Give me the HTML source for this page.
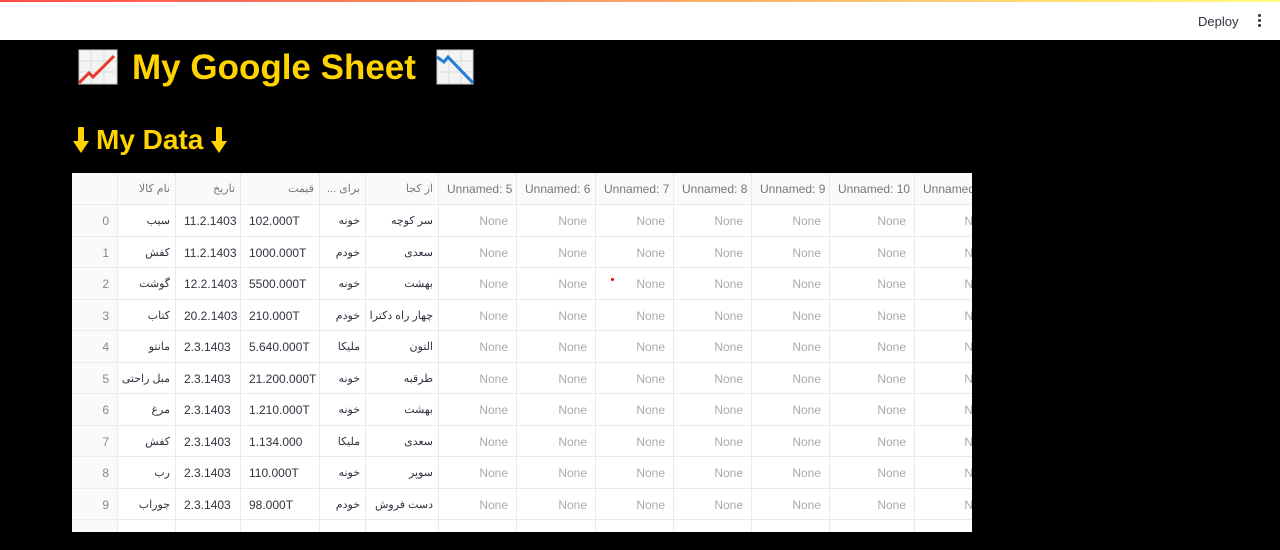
<!DOCTYPE html>
<html><head><meta charset="utf-8"><style>
*{margin:0;padding:0;box-sizing:border-box}
body{width:1280px;height:550px;background:#000;overflow:hidden;position:relative;font-family:"Liberation Sans","Noto Sans CJK SC",sans-serif}
.top{position:absolute;left:0;top:0;width:1280px;height:40px;background:#fff}
.grad{position:absolute;left:0;top:0;width:1280px;height:2px;background:linear-gradient(90deg,#ff4b4b,#fffd80)}
.deploy{position:absolute;left:1198px;top:14px;font-size:13px;color:#31333f}
.dots{position:absolute;left:1258px;top:14px;width:3px}
.dots i{display:block;width:3px;height:3px;border-radius:50%;background:#31333f;margin-bottom:2px}
.h1{position:absolute;left:132px;top:48px;color:#ffd400;font-weight:bold;font-size:35px;white-space:nowrap}
.h2{position:absolute;left:96px;top:124px;color:#ffd400;font-weight:bold;font-size:28px;white-space:nowrap}
.tbl{position:absolute;left:72px;top:173px;width:900px;height:359px;background:#fff;overflow:hidden}
.c{position:absolute;height:31.5px;line-height:33px;font-size:12px;color:#31333f;padding:0 8px;border-right:1px solid #eaeaec;border-bottom:1px solid #eaeaec;white-space:nowrap;overflow:hidden}
.h{color:#777;height:32px;line-height:33px;background:#fafafa}
.r{text-align:right}
.fa{direction:rtl;text-align:right;padding:0 5px;font-size:11px}
.n{color:#aaa}
.idx{color:#888;text-align:right;background:#fafafa}
</style></head><body>
<div class="top"><div class="grad"></div><div class="deploy">Deploy</div><div class="dots"><i></i><i></i><i></i></div></div>
<svg style="position:absolute;left:78px;top:49px" width="40" height="36" viewBox="0 0 40 36"><rect x="1" y="1" width="38" height="34" fill="#f4f4f4" stroke="#ccc"/><path d="M1 12H39M1 23H39M13 1V35M26 1V35" stroke="#ddd"/><path d="M1 34L11 24L15 28L36 7" stroke="#e53a2a" stroke-width="3" fill="none"/></svg>
<div class="h1">My Google Sheet</div>
<svg style="position:absolute;left:436px;top:49px" width="38" height="36" viewBox="0 0 38 36"><rect x="1" y="1" width="36" height="34" fill="#f4f4f4" stroke="#ccc"/><path d="M1 12H37M1 23H37M13 1V35M25 1V35" stroke="#ddd"/><path d="M1 8L8 13L12 8L37 34" stroke="#1e7fd6" stroke-width="3" fill="none"/></svg>
<svg style="position:absolute;left:73px;top:127px" width="16" height="26" viewBox="0 0 16 26"><rect x="5" y="0" width="6" height="15" rx="1" fill="#ffd400"/><path d="M0 14H16L8 26Z" fill="#ffd400"/></svg>
<div class="h2">My Data</div>
<svg style="position:absolute;left:211px;top:127px" width="16" height="26" viewBox="0 0 16 26"><rect x="5" y="0" width="6" height="15" rx="1" fill="#ffd400"/><path d="M0 14H16L8 26Z" fill="#ffd400"/></svg>
<div class="tbl" id="t"></div>
<div style="position:absolute;left:611px;top:278px;width:3px;height:3px;border-radius:50%;background:#e00"></div>
<script>
var xs=[0,46,104,169,248,294,367,445,524,602,680,758,843,930];
var hd=["","نام کالا","تاریخ","قیمت","برای ...","از کجا","Unnamed: 5","Unnamed: 6","Unnamed: 7","Unnamed: 8","Unnamed: 9","Unnamed: 10","Unnamed: 11"];
var rows=[["سیب","11.2.1403","102.000T","خونه","سر کوچه"],["کفش","11.2.1403","1000.000T","خودم","سعدی"],["گوشت","12.2.1403","5500.000T","خونه","بهشت"],["کتاب","20.2.1403","210.000T","خودم","چهار راه دکترا"],["مانتو","2.3.1403","5.640.000T","ملیکا","التون"],["مبل راحتی","2.3.1403","21.200.000T","خونه","طرقبه"],["مرغ","2.3.1403","1.210.000T","خونه","بهشت"],["کفش","2.3.1403","1.134.000","ملیکا","سعدی"],["رب","2.3.1403","110.000T","خونه","سوپر"],["جوراب","2.3.1403","98.000T","خودم","دست فروش"]];
var h="";
function cell(i,y,txt,cls){h+='<div class="c '+cls+'" style="left:'+xs[i]+'px;top:'+y+'px;width:'+(xs[i+1]-xs[i])+'px">'+txt+'</div>';}
for(var i=0;i<13;i++)cell(i,0,hd[i],"h "+(i>=1&&i<=5?"fa":""));
for(var r=0;r<11;r++){var y=32+r*31.5;var d=rows[r]||["","","","",""];
cell(0,y,r<10?r:"","idx");cell(1,y,d[0],"fa");cell(2,y,d[1],"");cell(3,y,d[2],"");cell(4,y,d[3],"fa");cell(5,y,d[4],"fa");
for(var k=6;k<13;k++)cell(k,y,r<10?"None":"","r n");}
document.getElementById("t").innerHTML=h;
</script>
</body></html>
